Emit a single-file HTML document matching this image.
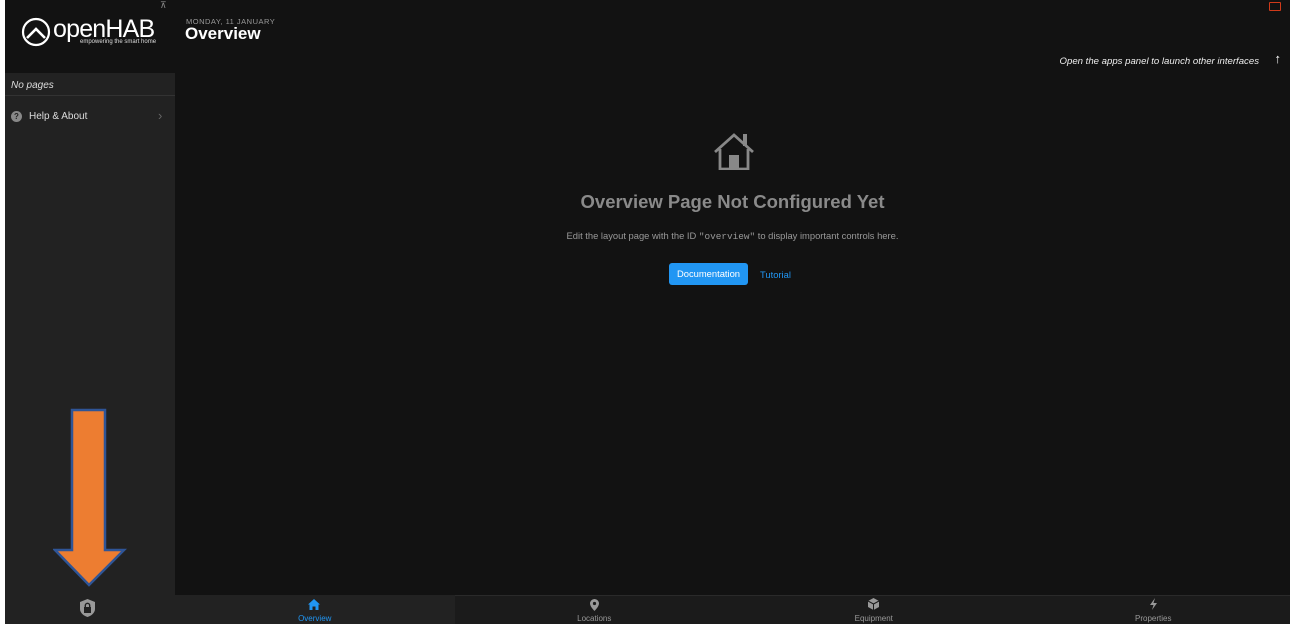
<!DOCTYPE html>
<html><head><style>
*{margin:0;padding:0;box-sizing:border-box}
body{width:1300px;height:627px;background:#fff;position:relative;overflow:hidden;font-family:"Liberation Sans",sans-serif}
.app{position:absolute;left:5px;top:0;width:1285px;height:624px;background:#121212}
.side{position:absolute;left:0;top:0;width:170px;height:624px;background:#222}
.logo{position:absolute;left:0;top:0;width:170px;height:73px;background:#121212}
.main{position:absolute;left:170px;top:0;right:0;height:624px}
.t{position:absolute;white-space:nowrap}
.tab{position:absolute;top:595px;height:29px;width:279.5px;text-align:center;color:#999;font-size:8px}
.tab span{position:absolute;left:0;right:0;top:19px}
</style></head><body>
<div class="app">
<div class="side">
 <div class="logo">
  <svg class="t" style="left:16px;top:17px" width="30" height="30" viewBox="0 0 30 30"><circle cx="15" cy="15" r="13" fill="none" stroke="#fff" stroke-width="2.2"/><path d="M6 21 L15 12 L24 21" fill="none" stroke="#fff" stroke-width="2.6"/></svg>
  <div class="t" style="left:48px;top:15px;color:#fff;font-size:25px;letter-spacing:-0.8px">openHAB</div>
  <div class="t" style="left:75px;top:39px;color:#ddd;font-size:6px">empowering the smart home</div>
  <div class="t" style="left:155px;top:0px;color:#888;font-size:9px">⊼</div>
 </div>
 <div class="t" style="left:0;top:73px;width:170px;height:23px;border-bottom:1px solid #333;background:#222"></div>
 <div class="t" style="left:6px;top:80px;color:#ddd;font-size:10px;font-style:italic">No pages</div>
 <div class="t" style="left:6px;top:111px;width:11px;height:11px;border-radius:50%;background:#888;color:#222;font-size:8px;text-align:center;line-height:11px;font-weight:bold">?</div>
 <div class="t" style="left:24px;top:111px;color:#ddd;font-size:10px">Help &amp; About</div>
 <div class="t" style="left:153px;top:108px;color:#666;font-size:13px">›</div>
 <svg class="t" style="left:48px;top:408px" width="74" height="180" viewBox="0 0 74 180"><path d="M19 2 H52 V142 H71 L36 177 L2 142 H19 Z" fill="#ed7d31" stroke="#2f5597" stroke-width="2.5"/></svg>
 <svg class="t" style="left:74px;top:598px" width="17" height="20" viewBox="0 0 17 20"><path d="M8.5 1 L16 4 V11 C16 15 12 18 8.5 19 C5 18 1 15 1 11 V4 Z" fill="#999"/><rect x="5" y="9" width="7" height="6" fill="#222"/><path d="M6.3 9 V7.5 a2.2 2.2 0 0 1 4.4 0 V9" fill="none" stroke="#222" stroke-width="1.4"/></svg>
</div>
<div class="main">
 <div class="t" style="left:11px;top:17px;color:#999;font-size:7.5px;letter-spacing:0.5px">MONDAY, 11 JANUARY</div>
 <div class="t" style="left:10px;top:24px;color:#fff;font-size:17px;font-weight:bold">Overview</div>
 <div class="t" style="left:1094px;top:2px;width:12px;height:9px;border:1.5px solid #d03a1a;border-radius:1px"></div>
 <div class="t" style="right:31px;top:56px;color:#eee;font-size:9.6px;font-style:italic">Open the apps panel to launch other interfaces</div>
 <div class="t" style="right:9px;top:51px;color:#fff;font-size:13px">↑</div>
 <svg class="t" style="left:537px;top:132px" width="44" height="38" viewBox="0 0 44 38"><path d="M3 20 L22 3 L41 20" fill="none" stroke="#888" stroke-width="2.8"/><path d="M8 17 V37 H36 V17" fill="none" stroke="#888" stroke-width="2.8"/><rect x="17" y="23" width="10" height="14" fill="#888"/><rect x="31" y="2" width="4" height="12" fill="#888"/></svg>
 <div class="t" style="left:0;right:0;top:191px;text-align:center;color:#8a8a8a;font-size:18.5px;font-weight:bold">Overview Page Not Configured Yet</div>
 <div class="t" style="left:0;right:0;top:230px;text-align:center;color:#999;font-size:9.4px">Edit the layout page with the ID <span style="font-family:'Liberation Mono',monospace">"overview"</span> to display important controls here.</div>
 <div class="t" style="left:494px;top:263px;width:79px;height:22px;background:#2196f3;border-radius:3px;color:#fff;font-size:9.4px;text-align:center;line-height:22px">Documentation</div>
 <div class="t" style="left:585px;top:269px;color:#2196f3;font-size:9.4px">Tutorial</div>
 <div class="t" style="left:0;right:0;top:595px;height:29px;background:#1b1b1b;border-top:1px solid #2a2a2a"></div>
 <div class="tab" style="left:0;background:#222;color:#2196f3"><svg style="position:absolute;left:133px;top:4px" width="12" height="11" viewBox="0 0 12 11"><path d="M6 0 L12 5.5 H10.5 V11 H7.5 V7.5 H4.5 V11 H1.5 V5.5 H0 Z" fill="#2196f3"/></svg><span>Overview</span></div>
 <div class="tab" style="left:279.5px"><svg style="position:absolute;left:135px;top:4px" width="9" height="12" viewBox="0 0 9 12"><path d="M4.5 0 A4.5 4.5 0 0 1 9 4.5 C9 7.5 4.5 12 4.5 12 C4.5 12 0 7.5 0 4.5 A4.5 4.5 0 0 1 4.5 0 Z" fill="#999"/><circle cx="4.5" cy="4.5" r="1.6" fill="#1b1b1b"/></svg><span>Locations</span></div>
 <div class="tab" style="left:559px"><svg style="position:absolute;left:134px;top:3px" width="11" height="12" viewBox="0 0 11 12"><path d="M5.5 0 L11 3 V9 L5.5 12 L0 9 V3 Z" fill="#999"/><path d="M0 3 L5.5 6 L11 3 M5.5 6 V12" stroke="#1b1b1b" stroke-width="1" fill="none"/></svg><span>Equipment</span></div>
 <div class="tab" style="left:838.5px"><svg style="position:absolute;left:135px;top:3px" width="9" height="12" viewBox="0 0 9 12"><path d="M6 0 L1 7 H4.5 L3 12 L8 5 H4.5 Z" fill="#999"/></svg><span>Properties</span></div>
</div>
</div>
</body></html>
